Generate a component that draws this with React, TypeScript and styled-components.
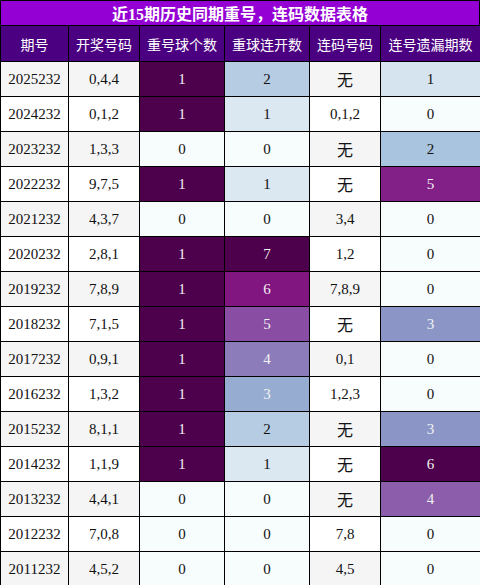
import React from "react";
import styled, { createGlobalStyle } from "styled-components";

const GlobalStyle = createGlobalStyle`
  html, body {
    margin: 0;
    padding: 0;
    background: #ffffff;
  }
  body {
    font-family: "Liberation Serif", "Noto Sans CJK SC", serif;
  }
`;

const Page = styled.div`
  width: 480px;
  box-sizing: border-box;
`;

const Title = styled.div`
  box-sizing: border-box;
  height: 25px;
  border: 1px solid #000;
  border-bottom: none;
  background: #9400d3;
  color: #fff;
  font-size: 16px;
  font-weight: bold;
  display: flex;
  align-items: center;
  justify-content: center;
`;

const Table = styled.table`
  width: 480px;
  border-collapse: collapse;
  table-layout: fixed;
`;

const Col = styled.col<{ $w: number }>`
  width: ${(p) => p.$w}px;
`;

const Th = styled.th`
  height: 35px;
  padding: 0;
  border: 1px solid #000;
  background: #4b0082;
  color: #fff;
  font-family: "Noto Sans CJK SC", sans-serif;
  font-size: 14px;
  font-weight: normal;
  text-align: center;
`;

const Td = styled.td<{ $bg: string; $fg: string }>`
  height: 34px;
  padding: 0;
  border: 1px solid #000;
  background: ${(p) => p.$bg};
  color: ${(p) => p.$fg};
  font-size: 15px;
  text-align: center;
`;

const Word = styled.span`
  font-family: "Noto Sans CJK SC", sans-serif;
  font-size: 16px;
`;

type Row = [string, string, number, number, string, number];

const rows: Row[] = [
  ["2025232", "0,4,4", 1, 2, "无", 1],
  ["2024232", "0,1,2", 1, 1, "0,1,2", 0],
  ["2023232", "1,3,3", 0, 0, "无", 2],
  ["2022232", "9,7,5", 1, 1, "无", 5],
  ["2021232", "4,3,7", 0, 0, "3,4", 0],
  ["2020232", "2,8,1", 1, 7, "1,2", 0],
  ["2019232", "7,8,9", 1, 6, "7,8,9", 0],
  ["2018232", "7,1,5", 1, 5, "无", 3],
  ["2017232", "0,9,1", 1, 4, "0,1", 0],
  ["2016232", "1,3,2", 1, 3, "1,2,3", 0],
  ["2015232", "8,1,1", 1, 2, "无", 3],
  ["2014232", "1,1,9", 1, 1, "无", 6],
  ["2013232", "4,4,1", 0, 0, "无", 4],
  ["2012232", "7,0,8", 0, 0, "7,8", 0],
  ["2011232", "4,5,2", 0, 0, "4,5", 0],
];

// BuPu colour map stops
const stops = [
  [247, 252, 253],
  [224, 236, 244],
  [191, 211, 230],
  [158, 188, 218],
  [140, 150, 198],
  [140, 107, 177],
  [136, 65, 157],
  [129, 15, 124],
  [77, 0, 75],
];

function bupu(t: number): number[] {
  const x = Math.min(Math.max(t, 0), 1) * (stops.length - 1);
  const i = Math.min(Math.floor(x), stops.length - 2);
  const f = x - i;
  return stops[i].map((c, k) => Math.round(c + (stops[i + 1][k] - c) * f));
}

function lum(rgb: number[]): number {
  const lin = rgb.map((c) => {
    const v = c / 255;
    return v <= 0.03928 ? v / 12.92 : Math.pow((v + 0.055) / 1.055, 2.4);
  });
  return 0.2126 * lin[0] + 0.7152 * lin[1] + 0.0722 * lin[2];
}

function heat(v: number, max: number) {
  const rgb = bupu(max ? v / max : 0);
  return {
    bg: `rgb(${rgb.join(",")})`,
    fg: lum(rgb) < 0.408 ? "#f1f1f1" : "#111",
  };
}

const headers = ["期号", "开奖号码", "重号球个数", "重球连开数", "连码号码", "连号遗漏期数"];
const widths = [68, 71, 85, 85, 71, 100];

export default function App() {
  const max3 = Math.max(...rows.map((r) => r[2]));
  const max4 = Math.max(...rows.map((r) => r[3]));
  const max6 = Math.max(...rows.map((r) => r[5]));

  return (
    <Page>
      <GlobalStyle />
      <Title>近15期历史同期重号，连码数据表格</Title>
      <Table>
        <colgroup>
          {widths.map((w, i) => (
            <Col key={i} $w={w} />
          ))}
        </colgroup>
        <thead>
          <tr>
            {headers.map((h) => (
              <Th key={h}>{h}</Th>
            ))}
          </tr>
        </thead>
        <tbody>
          {rows.map((r, i) => {
            const plain = i % 2 === 0 ? "#f5f5f5" : "#ffffff";
            const c3 = heat(r[2], max3);
            const c4 = heat(r[3], max4);
            const c6 = heat(r[5], max6);
            return (
              <tr key={r[0]}>
                <Td $bg={plain} $fg="#111">{r[0]}</Td>
                <Td $bg={plain} $fg="#111">{r[1]}</Td>
                <Td $bg={c3.bg} $fg={c3.fg}>{r[2]}</Td>
                <Td $bg={c4.bg} $fg={c4.fg}>{r[3]}</Td>
                <Td $bg={plain} $fg="#111">
                  {r[4] === "无" ? <Word>无</Word> : r[4]}
                </Td>
                <Td $bg={c6.bg} $fg={c6.fg}>{r[5]}</Td>
              </tr>
            );
          })}
        </tbody>
      </Table>
    </Page>
  );
}
